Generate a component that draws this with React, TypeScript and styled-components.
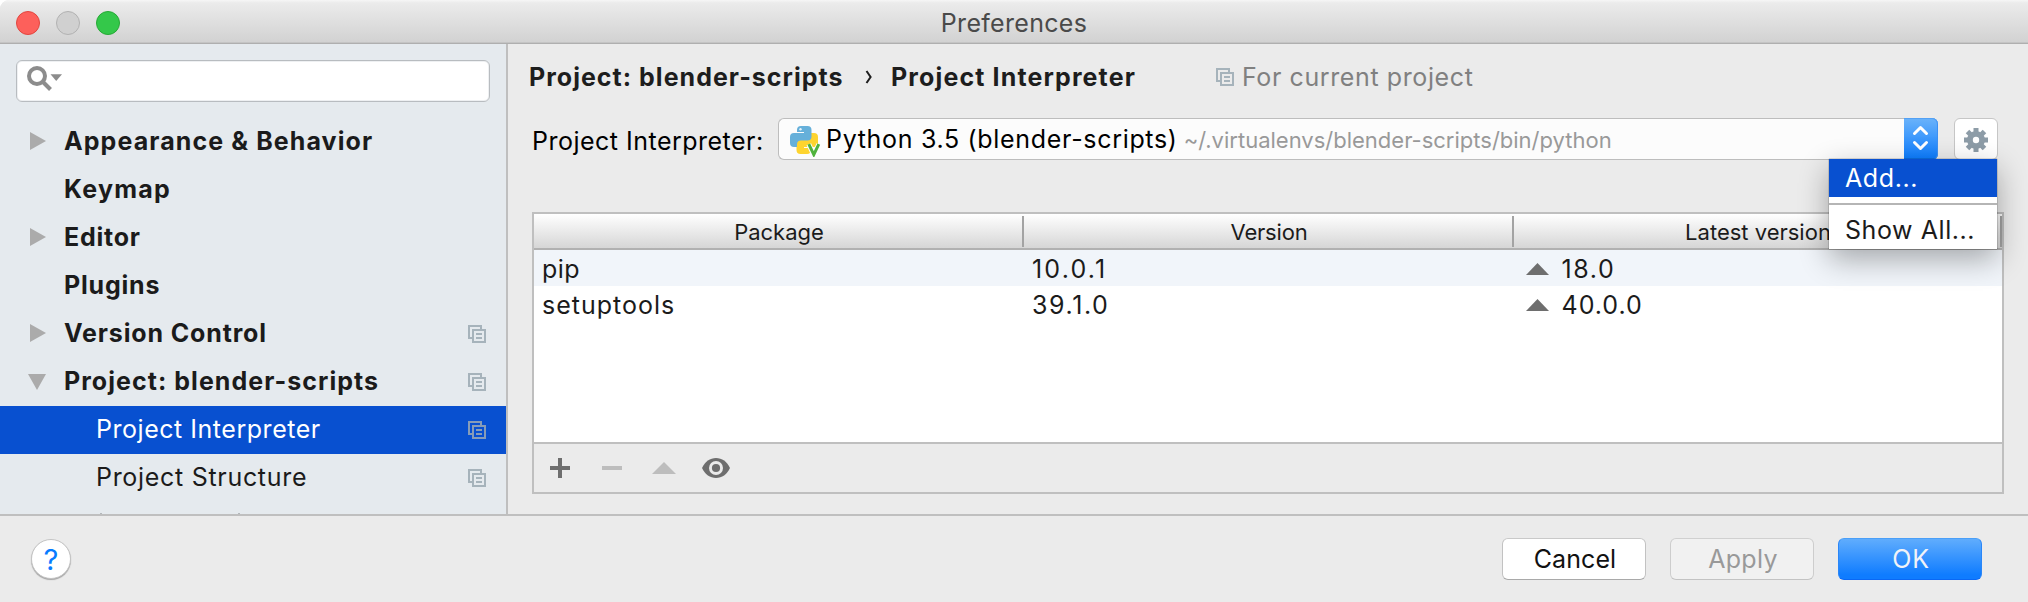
import React from "react";
import styled, { createGlobalStyle } from "styled-components";

const Global = createGlobalStyle`
  * { box-sizing: border-box; }
  body { margin: 0; background: #fff; overflow: hidden; }
`;

const Window = styled.div`
  width: 2028px;
  height: 602px;
  display: flex;
  flex-direction: column;
  overflow: hidden;
  background: #ebebeb;
  border-radius: 9px 0 0 0;
  font-family: Inter, "Liberation Sans", sans-serif;
  font-size: 25px;
  line-height: 30px;
  color: #1b1b1b;
  white-space: nowrap;
`;

const Text = styled.span<{ $track?: number }>`
  letter-spacing: ${(p) => p.$track ?? 0}px;
`;

/* Title bar */
const TitleBar = styled.header`
  flex: none;
  height: 44px;
  display: grid;
  grid-template-columns: 1fr auto 1fr;
  align-items: center;
  padding: 2px 16px 0 16px;
  color: #4a4a4a;
  background: linear-gradient(#f6f6f6 0, #ebebeb 3px, #d2d2d2 42px);
  border-bottom: 1px solid #afafaf;
  box-shadow: inset 0 -1px #c4c4c4;
`;

const Lights = styled.div`
  display: flex;
  gap: 16px;
`;

const Light = styled.i<{ $fill: string; $edge: string }>`
  width: 24px;
  height: 24px;
  border-radius: 50%;
  background: ${(p) => p.$fill};
  border: 1px solid ${(p) => p.$edge};
`;

const Body = styled.div`
  flex: none;
  height: 470px;
  display: flex;
`;

/* Sidebar */
const Sidebar = styled.nav`
  flex: none;
  width: 508px;
  overflow: hidden;
  padding-top: 16px;
  background: #e5eaee;
  border-right: 2px solid #bfbfbf;
`;

const Search = styled.div`
  width: 474px;
  height: 42px;
  margin: 0 0 16px 16px;
  padding: 5px 10px;
  background: #fff;
  border: 1px solid #b8bcc0;
  border-radius: 6px;
  box-shadow: inset 0 0 0 1px #eef0f2;
  svg { display: block; }
`;

const TreeRow = styled.div<{ $level: number; $selected?: boolean }>`
  height: 48px;
  display: flex;
  align-items: center;
  padding: 0 20px 2px 0;
  font-weight: ${(p) => (p.$level ? 400 : 700)};
  color: ${(p) => (p.$selected ? "#fff" : "#1b1b1b")};
  background: ${(p) => (p.$selected ? "#0850d0" : "transparent")};
  > span:nth-child(2) {
    flex: 1;
    padding-left: ${(p) => (p.$level ? 32 : 0)}px;
  }
  > svg {
    position: relative;
    top: 1px;
    stroke: ${(p) => (p.$selected ? "#869cb8" : "#a6b3bb")};
  }
`;

const Arrow = styled.span`
  width: 64px;
  height: 20px;
  padding-left: 28px;
  svg { display: block; }
`;

const CutRow = styled.div`
  height: 12px;
  display: flex;
  align-items: flex-end;
  gap: 136px;
  padding-left: 100px;
  i { width: 2px; height: 1px; background: #b4b8bb; }
`;

/* Main panel */
const Main = styled.main`
  flex: 1;
  padding: 0 24px 0 21px;
`;

const Breadcrumb = styled.div`
  height: 66px;
  display: flex;
  align-items: center;
`;

const Crumb = styled.div<{ $w: number }>`
  width: ${(p) => p.$w}px;
  font-weight: 700;
  color: #1d1d1d;
`;

const CrumbArrow = styled.svg`
  width: 27px;
  height: 14px;
`;

const Scope = styled.div`
  display: flex;
  align-items: center;
  gap: 8px;
  color: #808080;
`;

const FieldRow = styled.div`
  height: 42px;
  margin-top: 8px;
  display: flex;
  color: #000;
`;

const Label = styled.label`
  width: 249px;
  padding: 8px 0 0 3px;
`;

const Combo = styled.div`
  width: 1160px;
  display: flex;
  align-items: stretch;
  background: #fcfcfc;
  border: 1px solid #bdbdbd;
  border-right: 0;
  border-radius: 6px;
`;

const ComboValue = styled.div`
  flex: 1;
  display: flex;
  padding-left: 11px;
  > svg { margin-top: 7px; }
`;

const ComboText = styled.div`
  display: flex;
  align-items: baseline;
  gap: 6px;
  padding: 5px 0 0 5px;
`;

const Path = styled(Text)`
  font-size: 22px;
  color: #999;
`;

const Stepper = styled.div`
  width: 34px;
  margin: -1px 0;
  border-radius: 0 6px 6px 0;
  background: linear-gradient(#6bb3fa, #0a7bff);
  box-shadow: inset 0 1px #53a1f5, inset -1px 0 #3d90f3;
  svg { display: block; }
`;

const GearWrap = styled.div`
  position: relative;
  width: 44px;
  margin-left: 16px;
`;

const GearButton = styled.div`
  height: 42px;
  display: flex;
  align-items: center;
  justify-content: center;
  padding-top: 1px;
  background: #fff;
  border: 1px solid #c6c6c6;
  border-radius: 6px;
`;

const Menu = styled.div`
  position: absolute;
  z-index: 2;
  top: 41px;
  right: 1px;
  width: 168px;
  height: 90px;
  background: #fff;
  color: #1b1b1b;
  box-shadow: 0 0 1px rgba(0, 0, 0, 0.75), 0 10px 28px rgba(0, 0, 0, 0.32);
`;

const MenuItem = styled.div<{ $active?: boolean }>`
  height: ${(p) => (p.$active ? 38 : 44)}px;
  padding: ${(p) => (p.$active ? 4 : 10)}px 0 0 16px;
  color: ${(p) => (p.$active ? "#fff" : "#1b1b1b")};
  background: ${(p) => (p.$active ? "#0850d0" : "transparent")};
`;

const Separator = styled.div`
  height: 2px;
  margin-top: 6px;
  background: #b5b5b5;
`;

/* Package table */
const Table = styled.section`
  width: 1472px;
  height: 282px;
  margin: 52px 0 0 3px;
  display: flex;
  flex-direction: column;
  background: #fff;
  border: 2px solid #bfbfbf;
`;

const HeadRow = styled.div`
  height: 36px;
  display: grid;
  grid-template-columns: 490px 490px 488px;
  font-size: 22px;
  background: linear-gradient(#fff, #d6d6d6 34px);
  border-bottom: 2px solid #b1b1b1;
`;

const HeadCell = styled.div`
  margin: 2px 0;
  padding: 1px 0 0 2px;
  text-align: center;
  border-right: 2px solid #a3a3a3;
`;

const Row = styled.div<{ $striped?: boolean }>`
  height: 36px;
  display: grid;
  grid-template-columns: 490px 490px 488px;
  align-items: center;
  padding-top: 2px;
  background: ${(p) => (p.$striped ? "#f1f5fa" : "#fff")};
`;

const Cell = styled.div`
  display: flex;
  align-items: center;
  padding-left: 8px;
  svg { margin: 0 12.5px 0 4px; }
`;

const Toolbar = styled.div`
  height: 50px;
  margin-top: auto;
  display: flex;
  align-items: center;
  gap: 24px;
  padding-left: 12px;
  background: #ebebeb;
  border-top: 2px solid #bfbfbf;
`;

/* Footer */
const Footer = styled.footer`
  flex: 1;
  display: flex;
  align-items: flex-start;
  padding: 22px 46px 0 31px;
  border-top: 2px solid #bfbfbf;
`;

const Help = styled.div`
  width: 40px;
  height: 40px;
  margin: 1px auto 0 0;
  border-radius: 50%;
  background: #fff;
  border: 1px solid #c4c4c4;
  box-shadow: 0 1px 1px rgba(0, 0, 0, 0.3);
  color: #077cff;
  font-size: 29px;
  line-height: 39px;
  text-align: center;
`;

const Button = styled.div<{ $kind?: "primary" | "disabled" }>`
  width: 144px;
  height: 42px;
  margin-left: 24px;
  padding: 5px 0 0 2px;
  text-align: center;
  border-radius: 6px;
  border: 1px solid;
  ${(p) =>
    p.$kind === "primary"
      ? `color: #f1f3f8; background: linear-gradient(#62aefd, #0f7cff 88%) border-box; border-color: #4a9ff8 #2a86f8 #0a68f5;`
      : p.$kind === "disabled"
      ? `color: #999; background: #f1f1f1; border-color: #d0d0d0 #cdcdcd #c3c3c3;`
      : `color: #111; background: #fff; border-color: #c9c9c9 #c2c2c2 #a9a9a9;`}
`;

const CopyIcon = () => (
  <svg width="18" height="18" fill="none" stroke="#a6b3bb" strokeWidth="2" shapeRendering="crispEdges">
    <path d="M4 13H1V1H13V4M5 5H17V17H5ZM8 9H14M8 13H14" />
  </svg>
);

const PythonIcon = () => {
  const half =
    "M7 4a4 4 0 0 1 4-4h6.5a4 4 0 0 1 4 4v6.5a4 4 0 0 1-4 4h-6.5a4 4 0 0 0-4 4v2.5h-3a4 4 0 0 1-4-4v-6a4 4 0 0 1 4-4h10v-1h-7z";
  return (
    <svg width="31" height="31" viewBox="0 0 31 31">
      <path d={half} fill="#fed42f" transform="rotate(180 14 14)" />
      <path d={half} fill="#66b0da" />
      <circle cx="10.5" cy="3.2" r="1.2" fill="#e6f3fa" />
      <path d="M18.8 18.2L23.8 29L28.8 18.2" fill="none" stroke="#fcfcfc" strokeWidth="5" />
      <path d="M18.8 18.2L23.8 28.6L28.8 18.2" fill="none" stroke="#4fb23c" strokeWidth="3" />
    </svg>
  );
};

const GearIcon = () => (
  <svg width="24" height="24" viewBox="-12 -12 24 24" fill="#8d9ca7">
    {[0, 45, 90, 135].map((a) => (
      <rect key={a} x="-2.5" y="-12" width="5" height="24" transform={`rotate(${a})`} />
    ))}
    <circle r="9" />
    <circle r="3.2" fill="#fff" />
  </svg>
);

const UpIcon = ({ w, color }: { w: number; color: string }) => (
  <svg width={w} height="12" viewBox="0 0 24 12" preserveAspectRatio="none">
    <path d="M0 12L12 0L24 12Z" fill={color} />
  </svg>
);

type Node = {
  label: string;
  track: number;
  level?: number;
  arrow?: "right" | "down";
  shared?: boolean;
  selected?: boolean;
};

const tree: Node[] = [
  { label: "Appearance & Behavior", track: 1.09, arrow: "right" },
  { label: "Keymap", track: 1.25 },
  { label: "Editor", track: 0.75, arrow: "right" },
  { label: "Plugins", track: 0.8 },
  { label: "Version Control", track: 0.86, arrow: "right", shared: true },
  { label: "Project: blender-scripts", track: 1.04, arrow: "down", shared: true },
  { label: "Project Interpreter", track: 0.53, level: 1, shared: true, selected: true },
  { label: "Project Structure", track: 0.7, level: 1, shared: true },
];

const packages = [
  { name: "pip", nameTrack: 0.4, version: "10.0.1", vTrack: 2.2, latest: "18.0", lTrack: 1.6 },
  { name: "setuptools", nameTrack: 1.0, version: "39.1.0", vTrack: 1.6, latest: "40.0.0", lTrack: 1.0 },
];

export default function App() {
  return (
    <>
      <Global />
      <Window>
        <TitleBar>
          <Lights>
            <Light $fill="#fd605b" $edge="#e2463f" />
            <Light $fill="#d0d0d0" $edge="#b2b2b2" />
            <Light $fill="#34c84a" $edge="#27a936" />
          </Lights>
          <Text $track={0.3}>Preferences</Text>
        </TitleBar>

        <Body>
          <Sidebar>
            <Search>
              <svg width="36" height="26" fill="none" stroke="#8c8c8c">
                <circle cx="10" cy="10" r="8" strokeWidth="4" />
                <path d="M15.5 15.5L23.5 23.5" strokeWidth="4" />
                <path d="M23.5 8.2H35L29.2 15Z" fill="#8c8c8c" stroke="none" />
              </svg>
            </Search>
            {tree.map((n) => (
              <TreeRow key={n.label} $level={n.level ?? 0} $selected={n.selected}>
                <Arrow>
                  {n.arrow && (
                    <svg width="20" height="20" fill="#ababab">
                      <path d={n.arrow === "right" ? "M2 1V19L18 10Z" : "M0 3H18L9 19Z"} />
                    </svg>
                  )}
                </Arrow>
                <Text $track={n.track}>{n.label}</Text>
                {n.shared && <CopyIcon />}
              </TreeRow>
            ))}
            <CutRow>
              <i />
              <i />
            </CutRow>
          </Sidebar>

          <Main>
            <Breadcrumb>
              <Crumb $w={335}>
                <Text $track={1.02}>Project: blender-scripts</Text>
              </Crumb>
              <CrumbArrow viewBox="0 0 27 14" fill="none" stroke="#1d1d1d" strokeWidth="2">
                <path d="M2.5 1L6.6 7L2.5 13" />
              </CrumbArrow>
              <Crumb $w={325}>
                <Text $track={1.13}>Project Interpreter</Text>
              </Crumb>
              <Scope>
                <CopyIcon />
                <Text $track={0.6}>For current project</Text>
              </Scope>
            </Breadcrumb>

            <FieldRow>
              <Label>
                <Text $track={0.49}>Project Interpreter:</Text>
              </Label>
              <Combo>
                <ComboValue>
                  <PythonIcon />
                  <ComboText>
                    <Text $track={0.68}>Python 3.5 (blender-scripts)</Text>
                    <Path>~/.virtualenvs/blender-scripts/bin/python</Path>
                  </ComboText>
                </ComboValue>
                <Stepper>
                  <svg width="34" height="42" fill="none" stroke="#fff" strokeWidth="3" strokeLinecap="round" strokeLinejoin="round">
                    <path d="M10.5 15.5L16.5 9.5L22.5 15.5M10.5 24.5L16.5 30.5L22.5 24.5" />
                  </svg>
                </Stepper>
              </Combo>
              <GearWrap>
                <GearButton>
                  <GearIcon />
                </GearButton>
                <Menu>
                  <MenuItem $active>
                    <Text $track={0.6}>Add...</Text>
                  </MenuItem>
                  <Separator />
                  <MenuItem>
                    <Text $track={0.57}>Show All...</Text>
                  </MenuItem>
                </Menu>
              </GearWrap>
            </FieldRow>

            <Table>
              <HeadRow>
                <HeadCell>Package</HeadCell>
                <HeadCell>
                  <Text $track={-0.2}>Version</Text>
                </HeadCell>
                <HeadCell>Latest version</HeadCell>
              </HeadRow>
              {packages.map((p, i) => (
                <Row key={p.name} $striped={i % 2 === 0}>
                  <Cell>
                    <Text $track={p.nameTrack}>{p.name}</Text>
                  </Cell>
                  <Cell>
                    <Text $track={p.vTrack}>{p.version}</Text>
                  </Cell>
                  <Cell>
                    <UpIcon w={23} color="#6e6e6e" />
                    <Text $track={p.lTrack}>{p.latest}</Text>
                  </Cell>
                </Row>
              ))}
              <Toolbar>
                <svg width="28" height="24" fill="#6e6e6e">
                  <path d="M12 2H16V10H24V14H16V22H12V14H4V10H12Z" />
                </svg>
                <svg width="28" height="24" fill="#bdbdbd">
                  <path d="M4 10H24V14H4Z" />
                </svg>
                <svg width="28" height="24" fill="#bdbdbd">
                  <path d="M2 18H26L14 6Z" />
                </svg>
                <svg width="28" height="24" fill="#6e6e6e">
                  <path d="M0 12C3 5.5 8 2 14 2S25 5.5 28 12C25 18.5 20 22 14 22S3 18.5 0 12Z" />
                  <circle cx="14" cy="12" r="7" fill="#ebebeb" />
                  <circle cx="14" cy="12" r="4.1" />
                </svg>
              </Toolbar>
            </Table>
          </Main>
        </Body>

        <Footer>
          <Help>?</Help>
          <Button>
            <Text $track={0.09}>Cancel</Text>
          </Button>
          <Button $kind="disabled">
            <Text $track={0.29}>Apply</Text>
          </Button>
          <Button $kind="primary">
            <Text $track={0.8}>OK</Text>
          </Button>
        </Footer>
      </Window>
    </>
  );
}
